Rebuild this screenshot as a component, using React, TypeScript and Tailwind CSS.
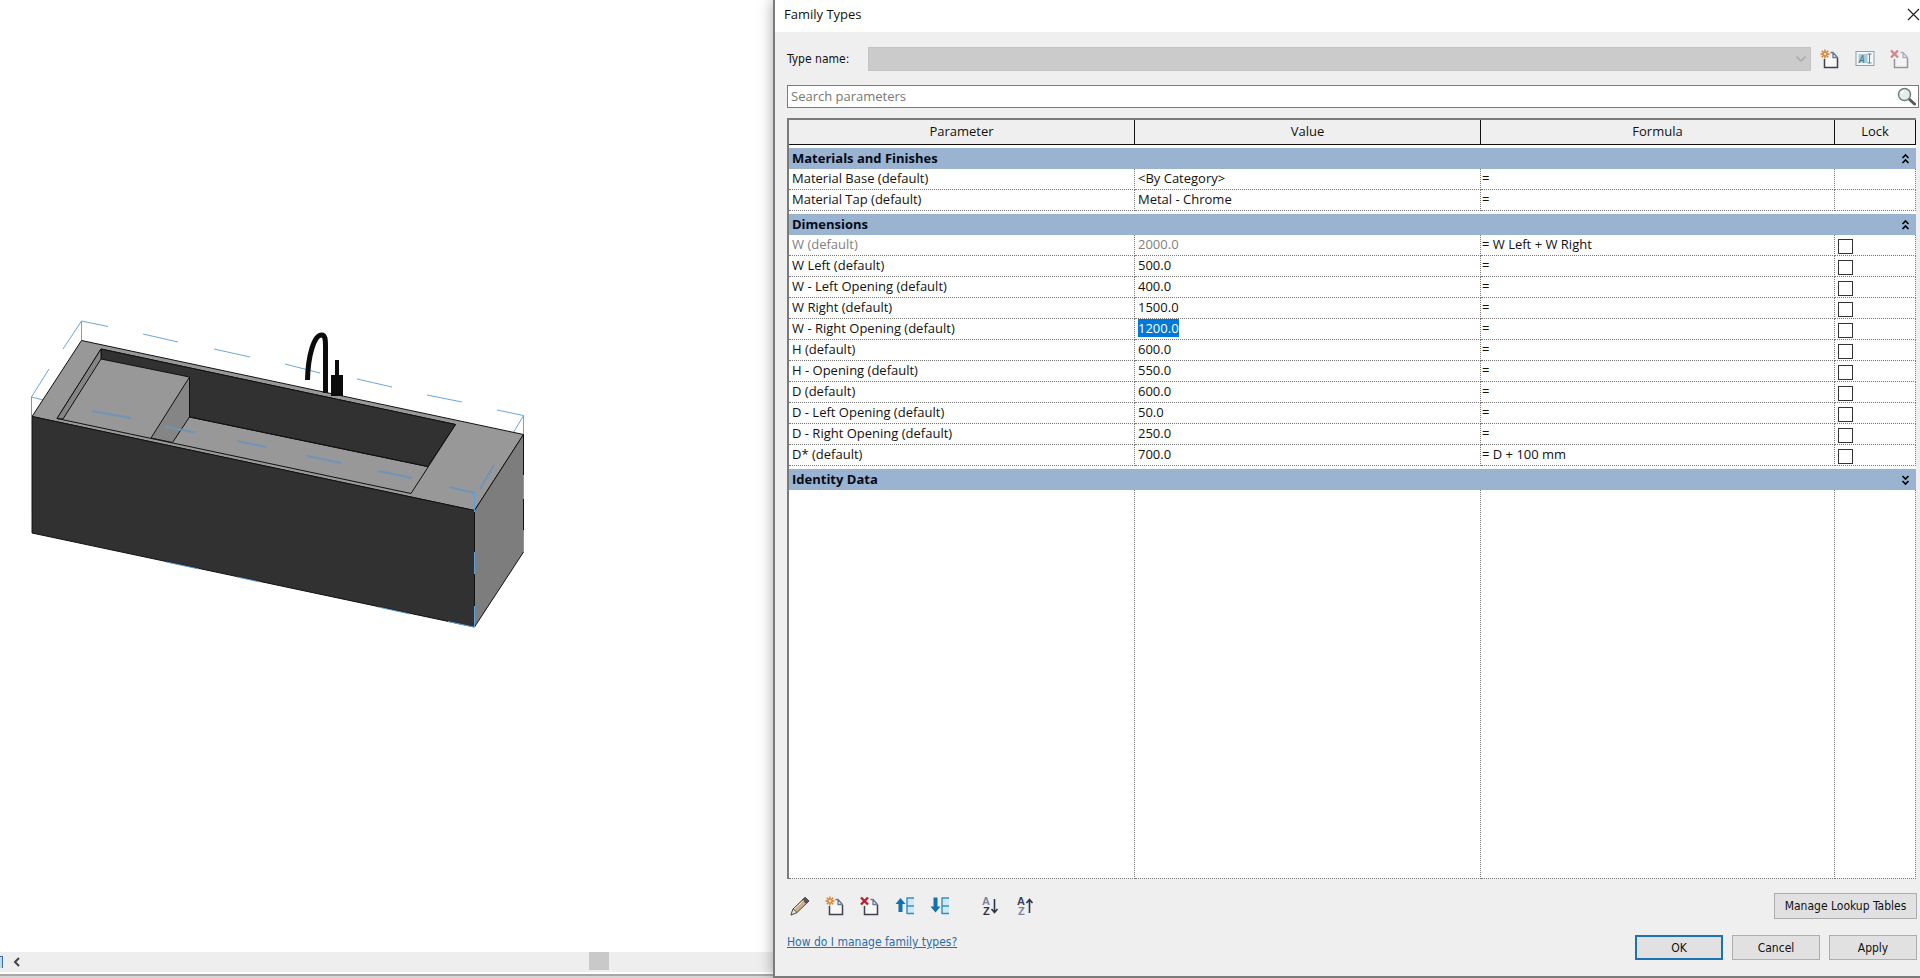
import { useEffect, useRef, useState } from "react";

type Row = {
  name: string;
  value: string;
  formula?: string;
  lockable?: boolean;
  readOnly?: boolean;
};

const materials: Row[] = [
  { name: "Material Base (default)", value: "<By Category>" },
  { name: "Material Tap (default)", value: "Metal - Chrome" },
];

const dimensions: Row[] = [
  { name: "W (default)", value: "2000.0", formula: "W Left + W Right", lockable: true, readOnly: true },
  { name: "W Left (default)", value: "500.0", lockable: true },
  { name: "W - Left Opening (default)", value: "400.0", lockable: true },
  { name: "W Right (default)", value: "1500.0", lockable: true },
  { name: "W - Right Opening (default)", value: "1200.0", lockable: true },
  { name: "H (default)", value: "600.0", lockable: true },
  { name: "H - Opening (default)", value: "550.0", lockable: true },
  { name: "D (default)", value: "600.0", lockable: true },
  { name: "D - Left Opening (default)", value: "50.0", lockable: true },
  { name: "D - Right Opening (default)", value: "250.0", lockable: true },
  { name: "D* (default)", value: "700.0", formula: "D + 100 mm", lockable: true },
];

const ACTIVE_ROW = "W - Right Opening (default)";

function PageIcon({ mark, faded }: { mark: "new" | "delete"; faded?: boolean }) {
  return (
    <svg width="20" height="20" viewBox="0 0 20 20" fill="none" className={faded ? "opacity-50" : ""}>
      <path d="M4.500 9v9.500h13V8L13 3.500h-2V9z" fill="#f8f8f8" />
      <path d="M4.500 10v8.500h13V8.500" stroke="#3f424b" strokeWidth="1.500" />
      <path d="M10.500 3.500h2.500l4.500 5M13 3.500V8.500h4.500" stroke="#6b7596" strokeWidth="1.300" />
      {mark === "new" ? (
        <>
          <path d="M5 .5v9M.5 5h9M1.800 1.800l6.400 6.400M8.200 1.800L1.800 8.200" stroke="#d9772b" strokeWidth="1.400" />
          <circle cx="5" cy="5" r="2" fill="#ffe9a8" stroke="#d9772b" />
        </>
      ) : (
        <path d="M1 1.500l7 7M8 1.500l-7 7" stroke="#b8202c" strokeWidth="2.400" />
      )}
    </svg>
  );
}

function RenameIcon() {
  return (
    <svg width="20" height="20" viewBox="0 0 20 20" fill="none">
      <rect x="1" y="2.500" width="18" height="14" fill="#f4f7f9" stroke="#8aa0ad" />
      <rect x="3.500" y="5" width="9" height="9" fill="#a9cbdb" />
      <text x="4" y="13.500" fontSize="10" fontStyle="italic" fill="#41728d">
        A
      </text>
      <path d="M12.500 5h4M14.500 5v9M12.500 14h4" stroke="#5b8299" />
    </svg>
  );
}

function PencilIcon() {
  return (
    <svg width="20" height="20" viewBox="0 0 20 20" fill="none">
      <path d="M1 19l2-6L15 1.500l4 3.500L7 16.500z" fill="#c9b08a" stroke="#4a4540" />
      <path d="M12.500 4L15 1.500l4 3.500-2.500 2.500z" fill="#5b5560" stroke="#4a4540" />
      <path d="M3.500 13.500L14 4.500" stroke="#f3e6cb" />
      <path d="M1 19l2-6 4 3.500z" fill="#eee7dc" stroke="#4a4540" strokeWidth="0.800" />
    </svg>
  );
}

function MoveIcon({ up }: { up?: boolean }) {
  return (
    <svg width="20" height="20" viewBox="0 0 20 20" fill="none">
      <path
        d={up ? "M5.500 2L10.500 8H7.500v8h-4V8H.500z" : "M5.500 16.500L.500 10.500h3v-9h4v9h3z"}
        fill="#1272ae"
      />
      <path d="M12 3h7v6h-7zM12 11h7v6h-7z" fill="#cfe8f5" />
      <path d="M12 2v16M11.500 2H19M12 10h7M12 17.500h7" stroke="#2f8fc4" strokeWidth="1.400" />
    </svg>
  );
}

function SortIcon({ up }: { up?: boolean }) {
  return (
    <svg width="20" height="20" viewBox="0 0 20 20" fill="none">
      <g fontFamily="Liberation Sans, sans-serif" fontSize="11" fontWeight="700">
        <text x="1" y="9" fill={up ? "#3d4258" : "#7c8399"}>
          A
        </text>
        <text x="2" y="18.500" fill={up ? "#7c8399" : "#2f3448"}>
          Z
        </text>
      </g>
      <path
        d={up ? "M13.500 17V4M10.500 7l3-3.500 3 3.500" : "M13.500 3v13M10.500 13l3 3.500 3-3.500"}
        stroke="#2f3448"
        strokeWidth="1.600"
      />
    </svg>
  );
}

function ModelView() {
  return (
    <svg width="560" height="340" viewBox="0 0 560 340" fill="none" className="mt-[300px] shrink-0">
      {/* bounding box behind the model */}
      <g stroke="#6ea6d8">
        <path d="M81.500 41V21L108 26.500M81.500 21L63 49M49 69L31.500 97V118M31.500 97L55 103" />
        <path d="M143 34l35 8M214 49l36 8M285 64l35 9M357 79l35 8M427 95l35 7M497 110l26.500 5.500V134M523.500 115.500L509 140" />
      </g>

      {/* outer faces */}
      <path d="M81.500 40.500L523.500 134.500L474.500 210.500L32 116.500z" fill="#989898" stroke="#111" />
      <path d="M32 116.500L474.500 210.500V327L32 233z" fill="#313131" stroke="#111" />
      <path d="M474.500 210.500L523.500 134.500V252L474.500 327z" fill="#7d7d7d" stroke="#111" />

      {/* basin */}
      <path d="M101 49L455.500 124.500L411 193.500L57 118.500z" fill="#989898" stroke="#111" />
      <path d="M101 49L455.500 124.500L427.500 166.500L189.500 117V77L101 59z" fill="#313131" stroke="#111" />
      <path d="M101 49V59L63 119L57 118.500z" fill="#858585" stroke="#111" />
      <path d="M189.500 77V117L172.500 142.500L151 138z" fill="#858585" stroke="#111" />
      <path d="M189.500 117L427.500 166.500" stroke="#111" />

      {/* dashed edges over the model */}
      <path
        d="M92 111l39 7M165 126.500l30 6M237 141l29 6M307 156l34 7M378 171l34 7M449 187l26 6M494 165l-14 24"
        stroke="#7093b8"
        strokeWidth="2"
      />
      <g stroke="#5f9fd8">
        <path d="M31.500 97v22M31.500 212v21M474.500 192v20M474.500 252v22M474.500 306v21M523.500 175v24M523.500 230v22" />
        <path d="M166 262l33 7M237 277l23 5M378 307l32 7M448 321.500l26 5.500" />
      </g>

      {/* tap */}
      <path d="M307.500 80C308 56 314 35 321.500 35C325.500 35 325.500 40 325.500 46V93" stroke="#0c0c0c" strokeWidth="5" />
      <path d="M335 60h4v15h4v21h-12V75h4z" fill="#0c0c0c" />
    </svg>
  );
}

function GroupHeader({ title, open, onToggle }: { title: string; open: boolean; onToggle: () => void }) {
  return (
    <tr className="h-[21px] bg-[#99b3d1]">
      <th colSpan={4} className="p-0">
        <div className="flex h-[21px] items-center justify-between pr-1.5 pl-[3px]">
          <span className="font-bold text-[#040a18]">{title}</span>
          <button aria-label={`Toggle ${title}`} aria-expanded={open} onClick={onToggle}>
            <svg width="9" height="12" viewBox="0 0 9 12" fill="none" stroke="#000" strokeWidth="1.600">
              <path d={open ? "M1.500 5l3-3 3 3M1.500 10l3-3 3 3" : "M1.500 2l3 3 3-3M1.500 7l3 3 3-3"} />
            </svg>
          </button>
        </div>
      </th>
    </tr>
  );
}

const gridLine = "border-r border-b border-dotted border-[#777]";
const cell = `${gridLine} h-[21px] p-0 pl-[3px]`;

function ParameterRow({ row }: { row: Row }) {
  const inputRef = useRef<HTMLInputElement>(null);
  const tone = row.readOnly ? "text-[#808080]" : "text-[#111]";

  useEffect(() => {
    if (row.name === ACTIVE_ROW) {
      inputRef.current?.focus();
      inputRef.current?.select();
    }
  }, [row.name]);

  return (
    <tr className="h-[21px]">
      <td className={`${cell} ${tone}`}>{row.name}</td>
      <td className={`${cell} align-top`}>
        <input
          ref={inputRef}
          aria-label={`${row.name} value`}
          defaultValue={row.value}
          readOnly={row.readOnly}
          className={`block h-[18px] w-full leading-[18px] outline-none selection:bg-[#0078d7] selection:text-white ${tone}`}
        />
      </td>
      <td className={`${gridLine} h-[21px] p-0 pl-px`}>= {row.formula}</td>
      <td className={cell}>
        {row.lockable && (
          <input
            type="checkbox"
            aria-label={`Lock ${row.name}`}
            className="mt-0.5 block size-[15px] appearance-none border border-[#333] bg-white checked:bg-[#333]"
          />
        )}
      </td>
    </tr>
  );
}

function Gap() {
  return (
    <tr className="h-[3px]">
      <td colSpan={4} className="h-[3px] p-0" />
    </tr>
  );
}

const dialogFont = "font-['DejaVu_Sans_Condensed','DejaVu_Sans',sans-serif] text-[12px]";
const button = `${dialogFont} border border-[#adadad] bg-[#e1e1e1] text-center text-[#111]`;

export default function App() {
  const [open, setOpen] = useState({ materials: true, dimensions: true, identity: false });
  const toggle = (key: keyof typeof open) => setOpen({ ...open, [key]: !open[key] });

  return (
    <div className="flex h-screen overflow-hidden bg-white font-['Open_Sans','Noto_Sans',sans-serif] text-[13px] text-[#111]">
      <main className="flex min-w-0 flex-1 flex-col">
        <div className="flex min-h-0 flex-1 items-start overflow-hidden">
          <ModelView />
        </div>
        <div className="flex h-5 items-center bg-[#eeeeee]">
          <span className="h-3 w-[3px] border-t border-r border-[#3d6ea5] bg-[#c5d8ea]" />
          <button aria-label="Scroll left" className="ml-2.5">
            <svg width="8" height="10" viewBox="0 0 8 10" fill="none" stroke="#444" strokeWidth="2">
              <path d="M6 1L2 5l4 4" />
            </svg>
          </button>
          <div className="flex h-full flex-1 justify-end">
            <span className="mr-[164px] h-[18px] w-5 bg-[#c9c9c9]" />
          </div>
        </div>
        <div className="h-1 border-b-2 border-[#a8a8a8] bg-white" />
        <div className="h-0.5 bg-[#d6d6d6]" />
      </main>

      <section
        aria-label="Family Types"
        className="flex w-[1147px] shrink-0 flex-col border-b-2 border-l-2 border-[#7b7b7b] bg-[#efefef] shadow-[0_0_14px_rgba(0,0,0,0.35)]"
      >
        <header className="flex h-8 items-center justify-between bg-white pl-[9px]">
          <h1 className="pb-0.5">Family Types</h1>
          <button aria-label="Close" className="pb-1">
            <svg width="13" height="13" viewBox="0 0 13 13" stroke="#222" strokeWidth="1.200">
              <path d="M1 1l11 11M12 1L1 12" />
            </svg>
          </button>
        </header>

        <div className="mt-[15px] flex h-6 items-center pr-2.5 pl-3">
          <label htmlFor="type-name" className={`${dialogFont} w-[81px]`}>
            Type name:
          </label>
          <div className="relative h-6 flex-1">
            <select id="type-name" disabled className="block h-6 w-full appearance-none border border-[#c3c3c3] bg-[#cbcbcb]" />
            <svg
              width="12"
              height="8"
              viewBox="0 0 12 8"
              fill="none"
              stroke="#aaa"
              strokeWidth="1.500"
              className="absolute top-2 right-1"
            >
              <path d="M1.500 1.500L6 6l4.500-4.500" />
            </svg>
          </div>
          <div className="ml-[9px] flex gap-[15px]">
            <button aria-label="New type">
              <PageIcon mark="new" />
            </button>
            <button aria-label="Rename type">
              <RenameIcon />
            </button>
            <button aria-label="Delete type">
              <PageIcon mark="delete" faded />
            </button>
          </div>
        </div>

        <div className="mt-3.5 mr-px ml-3 flex h-[23px] shrink-0 items-center border border-[#7a7a7a] bg-white pr-0.5">
          <input
            aria-label="Search parameters"
            placeholder="Search parameters"
            className="h-5 min-w-0 flex-1 pb-0.5 pl-[3px] outline-none placeholder:text-[#777]"
          />
          <svg width="19" height="19" viewBox="0 0 19 19" fill="none">
            <path d="M11.500 11.500l6 5.500" stroke="#555b58" strokeWidth="3" strokeLinecap="round" />
            <circle cx="7.500" cy="7.500" r="6" fill="#e3eeeb" stroke="#747d7a" strokeWidth="1.500" />
            <path d="M4 7a4 4 0 013-3" stroke="#fff" strokeWidth="1.500" />
          </svg>
        </div>

        <div className="mt-2.5 mr-1 ml-3 min-h-0 flex-1 border-t-2 border-l-2 border-[#7a7a7a] bg-white">
          <table className="h-full w-full table-fixed border-separate border-spacing-0 text-left">
            <colgroup>
              <col className="w-[30.7%]" />
              <col className="w-[30.7%]" />
              <col />
              <col className="w-[81px]" />
            </colgroup>
            <thead>
              <tr className="h-[25px] bg-[#efefef] text-center">
                {["Parameter", "Value", "Formula", "Lock"].map((title) => (
                  <th key={title} className="h-[25px] border-r border-b border-[#111] p-0 font-normal">
                    {title}
                  </th>
                ))}
              </tr>
            </thead>
            <tbody>
              <Gap />
              <GroupHeader title="Materials and Finishes" open={open.materials} onToggle={() => toggle("materials")} />
              {open.materials && materials.map((row) => <ParameterRow key={row.name} row={row} />)}
              <Gap />
              <GroupHeader title="Dimensions" open={open.dimensions} onToggle={() => toggle("dimensions")} />
              {open.dimensions && dimensions.map((row) => <ParameterRow key={row.name} row={row} />)}
              <Gap />
              <GroupHeader title="Identity Data" open={open.identity} onToggle={() => toggle("identity")} />
              <tr className="h-full">
                <td className={gridLine} />
                <td className={gridLine} />
                <td className={gridLine} />
                <td className={gridLine} />
              </tr>
            </tbody>
          </table>
        </div>

        <footer className="shrink-0 pr-[3px] pl-3">
          <div className="mt-3.5 flex h-[26px] items-center justify-between">
            <div className="flex items-center gap-[15px] pl-[3px]">
              <button aria-label="Edit parameter">
                <PencilIcon />
              </button>
              <button aria-label="New parameter">
                <PageIcon mark="new" />
              </button>
              <button aria-label="Delete parameter">
                <PageIcon mark="delete" />
              </button>
              <button aria-label="Move up">
                <MoveIcon up />
              </button>
              <button aria-label="Move down">
                <MoveIcon />
              </button>
              <button aria-label="Sort ascending" className="ml-4">
                <SortIcon />
              </button>
              <button aria-label="Sort descending">
                <SortIcon up />
              </button>
            </div>
            <button className={`${button} h-[26px] w-[143px]`}>Manage Lookup Tables</button>
          </div>
          <div className="mt-4 mb-4 flex h-[25px] justify-between">
            <a href="#help" className={`${dialogFont} leading-[14px] text-[#2a6db0] underline`}>
              How do I manage family types?
            </a>
            <div className="flex gap-[9px]">
              <button className={`${dialogFont} h-[25px] w-[88px] border-2 border-[#1a74b4] bg-[#e1e1e1]`}>OK</button>
              <button className={`${button} h-[25px] w-[88px]`}>Cancel</button>
              <button className={`${button} h-[25px] w-[88px]`}>Apply</button>
            </div>
          </div>
        </footer>
      </section>
    </div>
  );
}
